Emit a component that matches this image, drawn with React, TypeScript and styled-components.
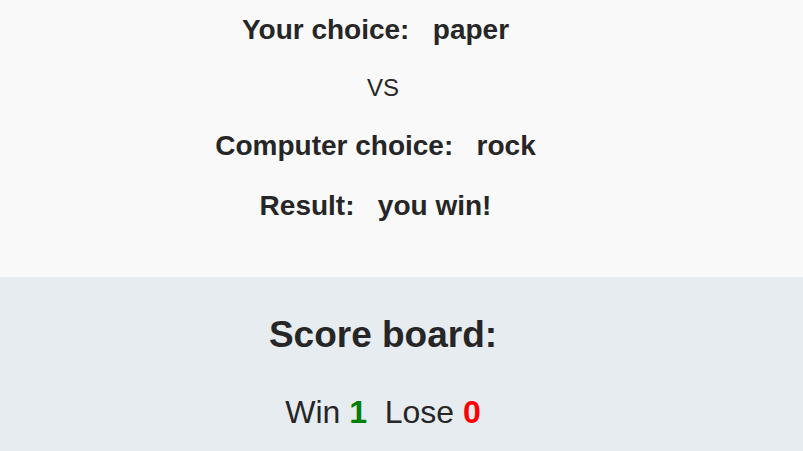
import styled, { createGlobalStyle } from 'styled-components'

const GlobalStyle = createGlobalStyle`
    html, body {
        margin: 0;
        padding: 0;
        background-color: #f9f9f9;
        font-family: "Liberation Sans", Arial, sans-serif;
        color: #262626;
    }
`

const Wrapper = styled.div`
    width: 803px;
    height: 451px;
    overflow: hidden;
    display: flex;
    flex-direction: column;
`

const Battle = styled.section`
    background-color: #f9f9f9;
    padding: 14px 37px 55px 0;
    display: flex;
    flex-direction: column;
    align-items: center;
    gap: 26px;
    & > div:last-child {
        margin-top: 2px;
    }
`

const Line = styled.div<{ $bold?: boolean; $size?: number }>`
    font-size: ${props => props.$size ?? 28}px;
    font-weight: ${props => (props.$bold ? 700 : 400)};
    line-height: 32px;
    white-space: pre;
    text-align: center;
`

const Value = styled.span`
    padding-right: 15px;
`

const Board = styled.section`
    flex: 1;
    background-color: #e7ecf0;
    display: flex;
    flex-direction: column;
    align-items: center;
    padding: 37px 37px 0 0;
`

const BoardTitle = styled.h2`
    margin: 0;
    font-size: 37px;
    line-height: 42px;
    font-weight: 700;
`

const Score = styled.div`
    margin-top: 38px;
    font-size: 32px;
    line-height: 36px;
    white-space: pre;
`

const Count = styled.span<{ $color: string }>`
    color: ${props => props.$color};
    font-weight: 700;
`

function App() {
    const you = 'paper'
    const computer = 'rock'
    const result = 'you win!'

    return (
        <Wrapper>
            <GlobalStyle />
            <Battle>
                <Line $bold>{'Your choice:   '}<Value>{you}</Value></Line>
                <Line $size={24}>VS</Line>
                <Line $bold>{'Computer choice:   '}<Value>{computer}</Value></Line>
                <Line $bold>{'Result:   '}<Value>{result}</Value></Line>
            </Battle>
            <Board>
                <BoardTitle>Score board:</BoardTitle>
                <Score>
                    Win <Count $color="#008000">1</Count>{'  '}Lose <Count $color="#ff0000">0</Count>
                </Score>
            </Board>
        </Wrapper>
    )
}

export default App
